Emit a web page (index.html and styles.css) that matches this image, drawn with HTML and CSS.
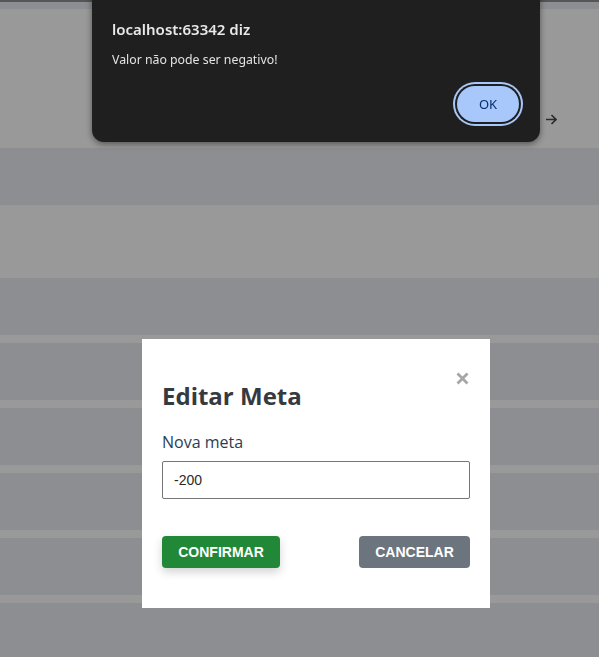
FILE: index.html
```html
<!DOCTYPE html>
<html lang="pt-BR">
<head>
<meta charset="utf-8">
<title>Editar Meta</title>
<link rel="stylesheet" href="styles.css">
</head>
<body>
<div class="page">
  <div class="topline"></div>
  <div class="topband"></div>
  <div class="hero">
    <svg class="arrow" width="12" height="11" viewBox="0 0 12 11"><path d="M1 5.5H11M6.5 1L11 5.5L6.5 10" fill="none" stroke="#484848" stroke-width="1.6"/></svg>
  </div>
  <div class="row"></div>
  <div class="spacer"></div>
  <div class="list">
    <div class="row"></div>
    <div class="row"></div>
    <div class="row"></div>
    <div class="row"></div>
    <div class="row"></div>
    <div class="row last"></div>
  </div>
</div>

<div class="overlay">
  <div class="modal">
    <div class="modal-head">
      <h2 class="modal-title">Editar Meta</h2>
      <button class="close" aria-label="Fechar"><svg width="13" height="13" viewBox="0 0 13 13"><path d="M1.5 1.5L11.5 11.5M11.5 1.5L1.5 11.5" stroke="#a6a6a6" stroke-width="2.8"/></svg></button>
    </div>
    <label class="label" for="meta">Nova meta</label>
    <input class="input" id="meta" type="text" value="-200">
    <div class="actions">
      <button class="btn btn-confirm">CONFIRMAR</button>
      <button class="btn btn-cancel">CANCELAR</button>
    </div>
  </div>
</div>

<div class="alert">
  <div class="alert-title">localhost:63342 diz</div>
  <div class="alert-msg">Valor não pode ser negativo!</div>
  <div class="alert-actions">
    <button class="alert-ok">OK</button>
  </div>
</div>
</body>
</html>
```

FILE: styles.css
```css
html, body {
  margin: 0;
  padding: 0;
  height: 100%;
  overflow: hidden;
}
body {
  background: #ebedf2;
  font-family: "Open Sans", "Noto Sans", sans-serif;
}
.page {
  display: flex;
  flex-direction: column;
  height: 657px;
}
.topline { height: 2px; background: #8f9092; }
.topband { height: 7px; background: #ebedf2; }
.hero {
  height: 139px;
  background: #ffffff;
  display: flex;
  justify-content: flex-end;
  align-items: flex-start;
  padding-top: 105px;
  padding-right: 42px;
  box-sizing: border-box;
}
.arrow { display: block; }
.row { height: 57px; background: #ebedf2; flex: none; }
.spacer { height: 73px; background: #ffffff; flex: none; }
.list {
  display: flex;
  flex-direction: column;
  gap: 8px;
  background: #ffffff;
  flex: 1;
}
.row.last { flex: 1; }

.overlay {
  position: fixed;
  inset: 0;
  background: rgba(0, 0, 0, 0.4);
  padding: 339px 0 0 142px;
  box-sizing: border-box;
}
.modal {
  width: 348px;
  height: 269px;
  box-sizing: border-box;
  background: #fff;
  padding: 33px 20px 0 20px;
  display: flex;
  flex-direction: column;
}
.modal-head {
  display: flex;
  justify-content: space-between;
  align-items: flex-start;
}
.modal-title {
  margin: 9px 0 0 0;
  font-size: 24px;
  line-height: 30px;
  font-weight: 700;
  color: #343a40;
}
.close {
  border: 0;
  background: none;
  padding: 0;
  margin: 0 1px 0 0;
  width: 13px;
  height: 13px;
  display: block;
}
.close svg { display: block; }
.label {
  margin-top: 20px;
  font-size: 16px;
  line-height: 22px;
  color: #2c3e50;
}
.input {
  margin-top: 8px;
  height: 38px;
  box-sizing: border-box;
  border: 1px solid #767676;
  border-radius: 2px;
  padding: 0 11px;
  font-family: "Liberation Sans", Arial, sans-serif;
  font-size: 14px;
  color: #2a2a2a;
  width: 100%;
}
.actions {
  margin-top: 37px;
  display: flex;
  justify-content: space-between;
}
.btn {
  height: 32px;
  border: 0;
  border-radius: 4px;
  color: #fff;
  font-family: "Liberation Sans", Arial, sans-serif;
  font-weight: 700;
  font-size: 14px;
  padding: 0;
}
.btn-confirm {
  width: 118px;
  background: #218838;
  box-shadow: 0 4px 10px rgba(0, 0, 0, 0.18);
}
.btn-cancel {
  width: 111px;
  background: #6c757d;
}

.alert {
  position: fixed;
  left: 92px;
  top: -14px;
  width: 448px;
  height: 156px;
  box-sizing: border-box;
  background: #1f1f1f;
  border-radius: 12px;
  box-shadow: 0 2px 6px rgba(0, 0, 0, 0.45);
  padding: 33px 20px 0 20px;
  font-family: "Noto Sans", "Open Sans", sans-serif;
  color: #e3e3e3;
  display: flex;
  flex-direction: column;
}
.alert-title {
  font-size: 15px;
  font-weight: 600;
  line-height: 20px;
  color: #e8e8e8;
}
.alert-msg {
  margin-top: 12px;
  font-size: 12.3px;
  line-height: 18px;
  color: #e3e3e3;
}
.alert-actions {
  margin-top: 17px;
  display: flex;
  justify-content: flex-end;
}
.alert-ok {
  width: 62px;
  height: 36px;
  margin-right: 1px;
  border: 0;
  border-radius: 18px;
  background: #a8c7fa;
  color: #062e6f;
  font-family: "Noto Sans", "Open Sans", sans-serif;
  font-size: 13px;
  box-shadow: 0 0 0 2px #1f1f1f, 0 0 0 4px #a8c7fa;
  padding: 0;
}
```
